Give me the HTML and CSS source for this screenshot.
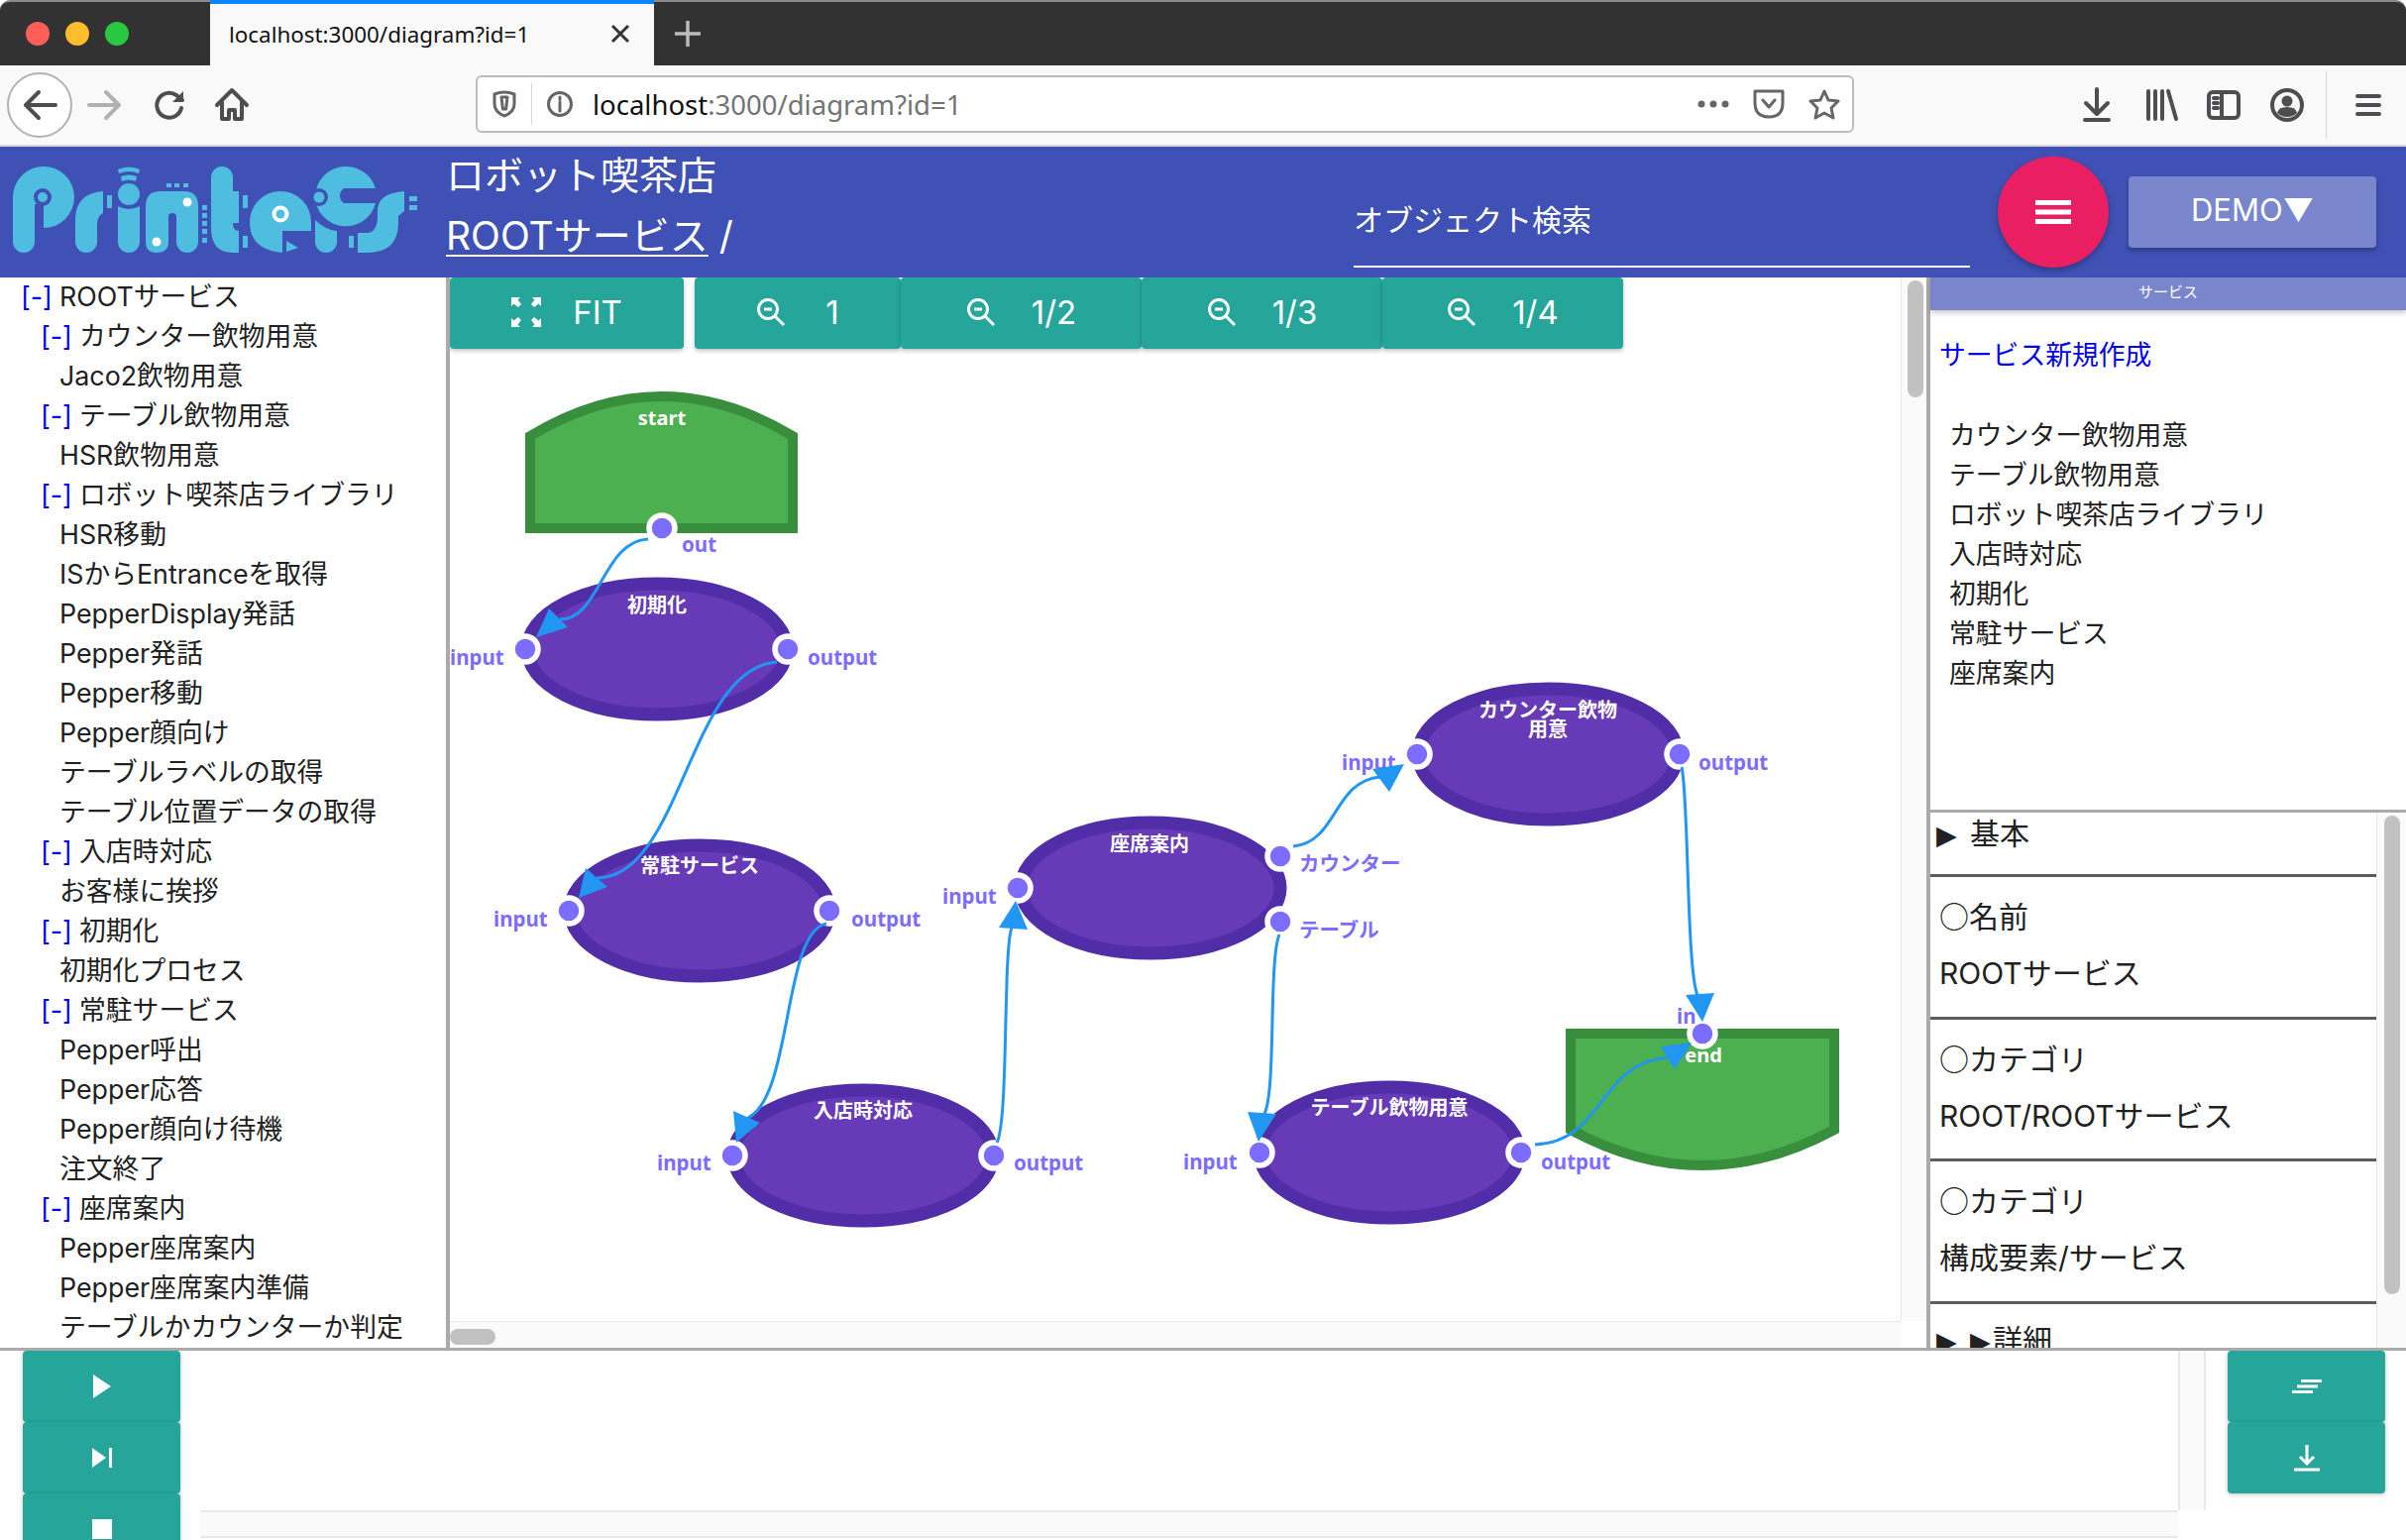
FILE: index.html
```html
<!DOCTYPE html>
<html lang="ja">
<head>
    <meta charset="UTF-8">
    <title>localhost:3000/diagram?id=1</title>
    <link rel="stylesheet" href="styles.css">
</head>
<body>
    <div class="tabbar">
        <div class="lights">
            <span class="light red"></span>
            <span class="light yellow"></span>
            <span class="light green"></span>
        </div>
        <div class="tab">
            <span class="tab-title">localhost:3000/diagram?id=1</span>
            <svg class="tab-close" width="20" height="20" viewBox="0 0 20 20"><path d="M2 2 18 18M18 2 2 18"/></svg>
        </div>
        <svg class="tab-new" width="30" height="30" viewBox="0 0 30 30"><path d="M15 2V28M2 15H28"/></svg>
    </div>

    <div class="toolbar">
        <div class="back-btn">
            <svg class="ticon" width="36" height="36" viewBox="0 0 36 36"><path d="M34 18H4M17 5 4 18 17 31"/></svg>
        </div>
        <svg class="ticon forward" width="36" height="36" viewBox="0 0 36 36"><path d="M2 18H32M19 5 32 18 19 31"/></svg>
        <svg class="ticon reload" width="36" height="36" viewBox="0 0 36 36"><path d="M30 21A12.5 12.5 0 1 1 25 8L31 13"/><path class="solid" d="M32 4V15H21Z"/></svg>
        <svg class="ticon home" width="36" height="36" viewBox="0 0 36 36"><path d="M3 18 18 3 33 18M8 15V32H15V23H21V32H28V15"/></svg>

        <div class="urlbar">
            <svg class="uicon shield" width="24" height="28" viewBox="0 0 24 28"><path d="M2 4Q12 0 22 4V14Q22 22 12 26 2 22 2 14Z"/><path d="M9 7H15L13.6 19H10.4Z"/></svg>
            <span class="url-sep"></span>
            <svg class="uicon info" width="26" height="26" viewBox="0 0 26 26"><circle cx="13" cy="13" r="11.5"/><path d="M13 11V20M13 6V8.5"/></svg>
            <span class="url-text">localhost<span class="url-rest">:3000/diagram?id=1</span></span>
            <svg class="uicon dots" width="32" height="8" viewBox="0 0 32 8"><circle cx="4" cy="4" r="3.5"/><circle cx="16" cy="4" r="3.5"/><circle cx="28" cy="4" r="3.5"/></svg>
            <svg class="uicon pocket" width="32" height="30" viewBox="0 0 32 30"><path d="M2 2H30V14Q30 28 16 28 2 28 2 14Z"/><path d="M10 11 16 18 22 11"/></svg>
            <svg class="uicon star" width="32" height="32" viewBox="0 0 32 32"><path d="M16 3 20 12 30 13 23 20 25 30 16 25 7 30 9 20 2 13 12 12Z"/></svg>
        </div>

        <svg class="ticon download" width="36" height="36" viewBox="0 0 36 36"><path d="M18 2V26M7 16 18 27 29 16M6 33H30"/></svg>
        <svg class="ticon library" width="36" height="36" viewBox="0 0 36 36"><path d="M5 4V32M12 4V32M19 4V32M25 4 33 32"/></svg>
        <svg class="ticon sidebar" width="36" height="36" viewBox="0 0 36 36"><rect x="3" y="5" width="30" height="26" rx="4"/><path d="M16 5V31M8 11H12M8 16H12M8 21H12"/></svg>
        <svg class="ticon account" width="36" height="36" viewBox="0 0 36 36"><circle cx="18" cy="18" r="15"/><circle class="solid" cx="18" cy="14" r="5.5"/><path class="solid" d="M8 26Q9 20 18 20 27 20 28 26 24 30 18 30 12 30 8 26Z"/></svg>
        <span class="tool-sep"></span>
        <svg class="ticon menu" width="36" height="36" viewBox="0 0 36 36"><path d="M7 9H29M7 18H29M7 27H29"/></svg>
    </div>

    <header class="appbar">
        <svg class="logo" width="428" height="100" viewBox="8 162 428 100" role="img" aria-label="ロゴ">
            <g class="logo-main">
                <path d="M13 199A31 31 0 0 1 75 199 31 31 0 0 1 44 230V206H35V244A11 11 0 0 1 13 244Z"/>
                <path d="M76 244V220Q77 195 104 193V215Q98 218 98 226V244A11 11 0 0 1 76 244Z"/>
                <rect x="108" y="197" width="5" height="13"/>
                <path d="M119 171Q130 166 141 171L140 175Q130 171 120 175Z"/>
                <path d="M122 178Q130 175 138 178L137 183Q130 180 123 183Z"/>
                <circle cx="130" cy="196" r="11"/>
                <path d="M119 208Q130 214 141 208V244A11 11 0 0 1 119 244Z"/>
                <path d="M147 244V208Q147 193 162 193H186Q200 193 200 208V244A11 11 0 0 1 178 244V219A4 4 0 0 0 170 219V244Q170 255 158 255 147 255 147 244Z"/>
                <rect x="168" y="185" width="5" height="4"/>
                <rect x="176" y="185" width="5" height="4"/>
                <rect x="185" y="185" width="5" height="4"/>
                <rect x="204" y="207" width="5" height="5"/>
                <rect x="204" y="215" width="5" height="5"/>
                <rect x="204" y="223" width="5" height="5"/>
                <rect x="204" y="231" width="5" height="5"/>
                <rect x="204" y="240" width="5" height="5"/>
                <path d="M213 179A11 11 0 0 1 235 179V193H241V225H235Q235 233 241 233V255H235Q213 255 213 230Z"/>
                <rect x="245" y="197" width="5" height="13"/>
                <rect x="245" y="238" width="5" height="12"/>
                <path d="M314 224V233H285V255Q252 252 252 224A31 31 0 0 1 314 224Z"/>
                <path d="M289 243 301 250 289 254Z"/>
                <path d="M349 168A31 31 0 0 1 379 190H347A9 9 0 0 0 347 205H379A31 31 0 0 1 318 199 31 31 0 0 1 349 168Z"/>
                <path d="M318 222Q328 232 340 233V244A11 11 0 0 1 318 244Z"/>
                <rect x="352" y="238" width="5" height="12"/>
                <path d="M361 235H370Q380 235 381 220V210Q383 195 408 193V213L402 218V225Q402 255 370 255H361Z"/>
                <rect x="413" y="198" width="8" height="5"/>
                <rect x="413" y="207" width="8" height="5"/>
            </g>
            <circle class="logo-gap" cx="43" cy="199" r="9"/>
            <circle class="logo-dot" cx="43" cy="199" r="5"/>
            <circle class="logo-gap" cx="322" cy="199" r="9"/>
            <circle class="logo-dot" cx="322" cy="199" r="5.5"/>
            <circle class="logo-white" cx="189" cy="204" r="4.5"/>
            <circle class="logo-white" cx="158" cy="244" r="4.5"/>
            <circle class="logo-white" cx="283" cy="216" r="8.5"/>
            <circle class="logo-dot" cx="283" cy="216" r="4.5"/>
        </svg>
        <div class="title">
            <div class="title-top">ロボット喫茶店</div>
            <div class="title-path"><a class="title-link">ROOTサービス</a> /</div>
        </div>
        <div class="search">オブジェクト検索</div>
        <button class="fab">
            <svg width="36" height="24" viewBox="0 0 36 24"><path d="M0 2.5H36M0 12H36M0 21.5H36"/></svg>
        </button>
        <button class="demo-btn">DEMO▼</button>
    </header>

    <div class="main">
        <nav class="tree">
            <div class="row lv0"><span class="toggle">[-]</span>ROOTサービス</div>
            <div class="row lv1"><span class="toggle">[-]</span>カウンター飲物用意</div>
            <div class="row leaf">Jaco2飲物用意</div>
            <div class="row lv1"><span class="toggle">[-]</span>テーブル飲物用意</div>
            <div class="row leaf">HSR飲物用意</div>
            <div class="row lv1"><span class="toggle">[-]</span>ロボット喫茶店ライブラリ</div>
            <div class="row leaf">HSR移動</div>
            <div class="row leaf">ISからEntranceを取得</div>
            <div class="row leaf">PepperDisplay発話</div>
            <div class="row leaf">Pepper発話</div>
            <div class="row leaf">Pepper移動</div>
            <div class="row leaf">Pepper顔向け</div>
            <div class="row leaf">テーブルラベルの取得</div>
            <div class="row leaf">テーブル位置データの取得</div>
            <div class="row lv1"><span class="toggle">[-]</span>入店時対応</div>
            <div class="row leaf">お客様に挨拶</div>
            <div class="row lv1"><span class="toggle">[-]</span>初期化</div>
            <div class="row leaf">初期化プロセス</div>
            <div class="row lv1"><span class="toggle">[-]</span>常駐サービス</div>
            <div class="row leaf">Pepper呼出</div>
            <div class="row leaf">Pepper応答</div>
            <div class="row leaf">Pepper顔向け待機</div>
            <div class="row leaf">注文終了</div>
            <div class="row lv1"><span class="toggle">[-]</span>座席案内</div>
            <div class="row leaf">Pepper座席案内</div>
            <div class="row leaf">Pepper座席案内準備</div>
            <div class="row leaf">テーブルかカウンターか判定</div>
        </nav>

        <section class="canvas-wrap">
            <div class="canvas-row">
                <div class="canvas">
                    <svg class="diagram" width="1464" height="1053" viewBox="454 280 1464 1053">
                        <path class="shape-end" d="M535 533V440Q667.5 360 800 440V533Z"/>
                        <path class="shape-end" d="M1585 1043H1851V1140Q1718 1212 1585 1140Z"/>
                        <ellipse class="shape-node" cx="663" cy="655" rx="131" ry="66"/>
                        <ellipse class="shape-node" cx="706" cy="919" rx="131" ry="66"/>
                        <ellipse class="shape-node" cx="871" cy="1166" rx="131" ry="66"/>
                        <ellipse class="shape-node" cx="1161" cy="896" rx="131" ry="66"/>
                        <ellipse class="shape-node" cx="1562" cy="761" rx="131" ry="66"/>
                        <ellipse class="shape-node" cx="1402" cy="1163" rx="131" ry="66"/>

                        <text class="node-name" x="668" y="429">start</text>
                        <text class="node-name" x="663" y="618">初期化</text>
                        <text class="node-name" x="706" y="881">常駐サービス</text>
                        <text class="node-name" x="871" y="1128">入店時対応</text>
                        <text class="node-name" x="1160" y="859">座席案内</text>
                        <text class="node-name" x="1562" y="724">カウンター飲物</text>
                        <text class="node-name" x="1562" y="743">用意</text>
                        <text class="node-name" x="1402" y="1125">テーブル飲物用意</text>
                        <text class="node-name" x="1719" y="1072">end</text>

                        <circle class="port" cx="668" cy="533" r="13"/>
                        <circle class="port" cx="530" cy="655" r="13"/>
                        <circle class="port" cx="795" cy="655" r="13"/>
                        <circle class="port" cx="574" cy="919" r="13"/>
                        <circle class="port" cx="837" cy="919" r="13"/>
                        <circle class="port" cx="739" cy="1166" r="13"/>
                        <circle class="port" cx="1003" cy="1166" r="13"/>
                        <circle class="port" cx="1027" cy="896" r="13"/>
                        <circle class="port" cx="1292" cy="864" r="13"/>
                        <circle class="port" cx="1292" cy="930" r="13"/>
                        <circle class="port" cx="1430" cy="761" r="13"/>
                        <circle class="port" cx="1695" cy="761" r="13"/>
                        <circle class="port" cx="1271" cy="1163" r="13"/>
                        <circle class="port" cx="1535" cy="1163" r="13"/>
                        <circle class="port" cx="1718" cy="1043" r="13"/>

                        <text class="port-name" x="688" y="557">out</text>
                        <text class="port-name" x="454" y="671">input</text>
                        <text class="port-name" x="815" y="671">output</text>
                        <text class="port-name" x="498" y="935">input</text>
                        <text class="port-name" x="859" y="935">output</text>
                        <text class="port-name" x="663" y="1181">input</text>
                        <text class="port-name" x="1023" y="1181">output</text>
                        <text class="port-name" x="951" y="912">input</text>
                        <text class="port-name" x="1311" y="879">カウンター</text>
                        <text class="port-name" x="1311" y="946">テーブル</text>
                        <text class="port-name" x="1354" y="777">input</text>
                        <text class="port-name" x="1714" y="777">output</text>
                        <text class="port-name" x="1194" y="1180">input</text>
                        <text class="port-name" x="1555" y="1180">output</text>
                        <text class="port-name" x="1692" y="1033">in</text>

                        <path class="edge" d="M654 544C608 546 606 625 565 625"/>
                        <path class="edge-head" d="M541 643 554 614 573 633Z"/>
                        <path class="edge" d="M784 668C695 674 688 886 602 886"/>
                        <path class="edge-head" d="M584 906 591 876 613 895Z"/>
                        <path class="edge" d="M834 932C790 940 800 1105 755 1128"/>
                        <path class="edge-head" d="M743 1153 740 1121 767 1133Z"/>
                        <path class="edge" d="M1006 1153C1018 1130 1012 960 1021 936"/>
                        <path class="edge-head" d="M1025 909 1008 936 1037 938Z"/>
                        <path class="edge" d="M1305 854C1350 850 1345 788 1393 784"/>
                        <path class="edge-head" d="M1417 771 1385 776 1402 799Z"/>
                        <path class="edge" d="M1697 774C1704 800 1702 980 1713 1004"/>
                        <path class="edge-head" d="M1718 1031 1701 1004 1730 1002Z"/>
                        <path class="edge" d="M1291 943C1280 970 1288 1100 1276 1124"/>
                        <path class="edge-head" d="M1270 1152 1259 1122 1288 1124Z"/>
                        <path class="edge" d="M1549 1155C1620 1152 1612 1072 1684 1067"/>
                        <path class="edge-head" d="M1707 1052 1676 1056 1690 1079Z"/>
                    </svg>
                    <div class="zoom-bar">
                        <button class="btn btn-fit">
                            <svg class="btn-icon" width="30" height="30" viewBox="0 0 30 30"><path class="solid" d="M0 0H9L6.5 2.5 10 7 7 10 2.5 6.5 0 9ZM30 0V9L27.5 6.5 23 10 20 7 23.5 2.5 21 0ZM0 30V21L2.5 23.5 7 20 10 23 6.5 27.5 9 30ZM30 30H21L23.5 27.5 20 23 23 20 27.5 23.5 30 21Z"/></svg>
                            FIT
                        </button>
                        <button class="btn btn-one">
                            <svg class="btn-icon" width="30" height="30" viewBox="0 0 30 30"><circle cx="12" cy="12" r="9.5"/><path d="M19 19 28 28M8 12H16"/></svg>
                            1
                        </button>
                        <button class="btn btn-part">
                            <svg class="btn-icon" width="30" height="30" viewBox="0 0 30 30"><circle cx="12" cy="12" r="9.5"/><path d="M19 19 28 28M8 12H16"/></svg>
                            1/2
                        </button>
                        <button class="btn btn-part">
                            <svg class="btn-icon" width="30" height="30" viewBox="0 0 30 30"><circle cx="12" cy="12" r="9.5"/><path d="M19 19 28 28M8 12H16"/></svg>
                            1/3
                        </button>
                        <button class="btn btn-part">
                            <svg class="btn-icon" width="30" height="30" viewBox="0 0 30 30"><circle cx="12" cy="12" r="9.5"/><path d="M19 19 28 28M8 12H16"/></svg>
                            1/4
                        </button>
                    </div>
                </div>
                <div class="vtrack"><div class="vthumb"></div></div>
            </div>
            <div class="htrack"><div class="hthumb"></div></div>
        </section>

        <aside class="side">
            <div class="side-tab">サービス</div>
            <div class="side-top">
                <a class="side-link">サービス新規作成</a>
                <ul class="side-list">
                    <li>カウンター飲物用意</li>
                    <li>テーブル飲物用意</li>
                    <li>ロボット喫茶店ライブラリ</li>
                    <li>入店時対応</li>
                    <li>初期化</li>
                    <li>常駐サービス</li>
                    <li>座席案内</li>
                </ul>
            </div>
            <div class="props-wrap">
                <div class="props">
                    <div class="prop-head"><span class="arrow">▶</span>基本</div>
                    <div class="prop"><p><span class="mark">○</span>名前</p><p>ROOTサービス</p></div>
                    <div class="prop"><p><span class="mark">○</span>カテゴリ</p><p>ROOT/ROOTサービス</p></div>
                    <div class="prop"><p><span class="mark">○</span>カテゴリ</p><p>構成要素/サービス</p></div>
                    <div class="prop-head prop-more"><span class="arrow">▶</span><span class="arrow arrow-small">▶</span>詳細</div>
                </div>
                <div class="props-track"><div class="props-thumb"></div></div>
            </div>
        </aside>
    </div>

    <div class="bottom">
        <div class="run-btns">
            <button class="btn btn-run"><svg width="18" height="24" viewBox="0 0 18 24"><path class="solid" d="M0 0 18 12 0 24Z"/></svg></button>
            <button class="btn btn-run"><svg width="20" height="20" viewBox="0 0 20 20"><path class="solid" d="M0 0 14 10 0 20ZM17 0H20V20H17Z"/></svg></button>
            <button class="btn btn-run"><svg width="20" height="20" viewBox="0 0 20 20"><path class="solid" d="M0 0H20V20H0Z"/></svg></button>
        </div>
        <div class="editor">
            <div class="editor-row">
                <div class="editor-text"></div>
                <div class="editor-vtrack"></div>
            </div>
            <div class="editor-htrack"></div>
        </div>
        <div class="log-btns">
            <button class="btn btn-run"><svg width="30" height="14" viewBox="0 0 30 14"><path d="M9 1.5H30M5 7H26M0 12.5H21"/></svg></button>
            <button class="btn btn-run"><svg width="28" height="28" viewBox="0 0 28 28"><path d="M14 1V19M7 13 14 20 21 13"/><path d="M1 26H27"/></svg></button>
        </div>
    </div>
</body>
</html>
```

FILE: styles.css
```css
html, body {
    margin: 0;
    padding: 0;
}
body {
    width: 2428px;
    height: 1554px;
    overflow: hidden;
    background: white;
    color: #212121;
    font-family: Inter, "Noto Sans CJK JP", sans-serif;
    font-size: 26.8px;
    display: flex;
    flex-direction: column;
}
button {
    border: none;
    font-family: inherit;
    color: white;
    padding: 0;
}
.solid {
    fill: white;
    stroke: none;
}

/* browser chrome */
.tabbar {
    height: 64px;
    flex: none;
    display: flex;
    align-items: center;
    background: #323232;
    border-top: 2px solid #8a8a8a;
    border-radius: 10px 10px 0 0;
}
.lights {
    width: 212px;
    flex: none;
    display: flex;
    gap: 16px;
    padding-left: 26px;
    box-sizing: border-box;
}
.light {
    width: 24px;
    height: 24px;
    border-radius: 50%;
}
.red { background: #ff5f57; }
.yellow { background: #ffbd2e; }
.green { background: #28c940; }
.tab {
    width: 448px;
    height: 66px;
    margin-top: -2px;
    flex: none;
    box-sizing: border-box;
    border-top: 4px solid #0a84ff;
    background: #f9f9fa;
    display: flex;
    align-items: center;
    padding: 0 24px 2px 19px;
    justify-content: space-between;
}
.tab-title {
    font-family: "Noto Sans", sans-serif;
    font-size: 22.4px;
    color: #111;
}
.tab-close path {
    stroke: #333;
    stroke-width: 3;
    fill: none;
}
.tab-new {
    margin-left: 19px;
}
.tab-new path {
    stroke: #bbb;
    stroke-width: 3.5;
    fill: none;
}

.toolbar {
    height: 80px;
    flex: none;
    display: flex;
    align-items: center;
    background: #f9f9fa;
    border-bottom: 2px solid #d9d9db;
}
.ticon {
    flex: none;
}
.ticon path, .ticon circle, .ticon rect {
    stroke: #4e4e50;
    stroke-width: 4;
    fill: none;
    stroke-linecap: round;
    stroke-linejoin: round;
}
.ticon .solid {
    fill: #4e4e50;
    stroke: none;
}
.back-btn {
    width: 62px;
    height: 62px;
    margin-left: 7px;
    flex: none;
    display: flex;
    align-items: center;
    justify-content: center;
    background: white;
    border: 2px solid #b1b1b3;
    border-radius: 50%;
}
.forward { margin-left: 15px; }
.forward path { stroke: #b1b1b3; }
.reload { margin-left: 29px; }
.home { margin-left: 27px; }

.urlbar {
    width: 1391px;
    height: 58px;
    margin-left: 228px;
    margin-top: -2px;
    flex: none;
    box-sizing: border-box;
    display: flex;
    align-items: center;
    background: white;
    border: 2px solid #bcbcbe;
    border-radius: 6px;
}
.uicon path, .uicon circle {
    stroke: #666;
    stroke-width: 3;
    fill: none;
    stroke-linejoin: round;
    stroke-linecap: round;
}
.shield { margin-left: 15px; flex: none; }
.url-sep {
    width: 1px;
    height: 42px;
    margin-left: 15px;
    background: #d8d8da;
}
.info { margin-left: 15px; flex: none; }
.url-text {
    font-family: "Noto Sans", sans-serif;
    font-size: 27.5px;
    color: #111;
    margin-left: 20px;
    flex: 1;
}
.url-rest { color: #737373; }
.dots { flex: none; }
.dots circle { fill: #666; stroke: none; }
.pocket { margin-left: 24px; flex: none; }
.star { margin-left: 24px; margin-right: 12px; flex: none; }

.download { margin-left: 227px; }
.library { margin-left: 29px; }
.sidebar { margin-left: 27px; }
.account { margin-left: 28px; }
.tool-sep {
    width: 1px;
    height: 68px;
    margin-left: 21px;
    background: #d8d8da;
}
.menu { margin-left: 24px; }

/* app header */
.appbar {
    height: 132px;
    flex: none;
    display: flex;
    align-items: center;
    background: #3f51b5;
    color: white;
}
.logo {
    margin-left: 8px;
    margin-top: -5px;
    flex: none;
}
.logo-main { fill: #4fbde0; }
.logo-gap { fill: #3f51b5; }
.logo-dot { fill: #4fbde0; }
.logo-white { fill: white; }
.title {
    width: 916px;
    margin-left: 14px;
    font-size: 39px;
    line-height: 61px;
    margin-top: -14px;
    flex: none;
}
.title-link {
    text-decoration: underline;
    text-underline-offset: 5px;
    text-decoration-thickness: 2px;
}
.search {
    width: 622px;
    height: 64px;
    flex: none;
    box-sizing: border-box;
    margin-top: 48px;
    font-size: 30px;
    line-height: 32px;
    border-bottom: 2px solid white;
}
.fab {
    width: 112px;
    height: 112px;
    margin-left: 28px;
    flex: none;
    border-radius: 50%;
    background: #e91e63;
    box-shadow: 0 3px 6px rgba(0,0,0,0.3);
    display: flex;
    align-items: center;
    justify-content: center;
}
.fab path {
    stroke: white;
    stroke-width: 5;
}
.demo-btn {
    width: 250px;
    height: 72px;
    margin-left: 20px;
    padding-bottom: 5px;
    flex: none;
    background: #7986cb;
    border-radius: 4px;
    font-size: 31px;
    box-shadow: 0 3px 5px rgba(0,0,0,0.3);
}

/* main area */
.main {
    height: 1080px;
    flex: none;
    display: flex;
    border-bottom: 3px solid #aaa;
}
.tree {
    width: 450px;
    flex: none;
    overflow: hidden;
    border-right: 4px solid #aaa;
}
.row {
    height: 40px;
    line-height: 38px;
    white-space: nowrap;
}
.lv0 { padding-left: 21px; }
.lv1 { padding-left: 41px; }
.leaf { padding-left: 60px; }
.toggle {
    display: inline-block;
    width: 39px;
    color: #0000ee;
}

.canvas-wrap {
    width: 1490px;
    flex: none;
    display: flex;
    flex-direction: column;
    border-right: 4px solid #aaa;
}
.canvas-row {
    height: 1053px;
    flex: none;
    display: flex;
}
.canvas {
    width: 1464px;
    flex: none;
    position: relative;
    overflow: hidden;
}
.diagram {
    position: absolute;
    left: 0;
    top: 0;
}
.shape-end {
    fill: #4caf50;
    stroke: #388e3c;
    stroke-width: 10;
}
.shape-node {
    fill: #673ab7;
    stroke: #512da8;
    stroke-width: 13;
}
.node-name {
    fill: white;
    font-family: "Noto Sans", "Noto Sans CJK JP", sans-serif;
    font-size: 20px;
    font-weight: 700;
    text-anchor: middle;
}
.port {
    fill: #7c6cff;
    stroke: white;
    stroke-width: 5.5;
}
.port-name {
    fill: #7c6cff;
    font-family: "Noto Sans", "Noto Sans CJK JP", sans-serif;
    font-size: 20.5px;
    font-weight: 700;
}
.edge {
    fill: none;
    stroke: #2196f3;
    stroke-width: 3;
}
.edge-head {
    fill: #2196f3;
}

.zoom-bar {
    position: relative;
    display: flex;
}
.btn {
    background: #26a69a;
    border-radius: 4px;
    display: flex;
    align-items: center;
    justify-content: center;
    font-size: 33px;
    box-shadow: 0 2px 4px rgba(0,0,0,0.25);
    flex: none;
}
.btn svg path, .btn svg circle {
    stroke: white;
    stroke-width: 3;
    fill: none;
}
.btn svg .solid {
    fill: white;
    stroke: none;
}
.zoom-bar .btn { height: 72px; padding-bottom: 2px; }
.btn-fit { width: 236px; margin-right: 11px; gap: 32px; }
.btn-one { width: 208px; gap: 40px; }
.btn-part { width: 243px; gap: 36px; }

.vtrack {
    width: 26px;
    flex: none;
    background: #fafafa;
    border-left: 1px solid #e8e8e8;
    box-sizing: border-box;
}
.vthumb {
    width: 16px;
    height: 118px;
    margin: 3px 0 0 6px;
    background: #c1c1c1;
    border-radius: 8px;
}
.htrack {
    height: 27px;
    width: 1464px;
    box-sizing: border-box;
    background: #fafafa;
    border-top: 1px solid #e8e8e8;
}
.hthumb {
    width: 46px;
    height: 16px;
    margin-top: 7px;
    background: #c1c1c1;
    border-radius: 8px;
}

.side {
    flex: 1;
    min-width: 0;
    display: flex;
    flex-direction: column;
}
.side-tab {
    height: 33px;
    flex: none;
    background: #7986cb;
    color: white;
    font-size: 15px;
    line-height: 30px;
    text-align: center;
    box-shadow: 0 3px 5px rgba(0,0,0,0.2);
    position: relative;
}
.side-top {
    height: 507px;
    flex: none;
    box-sizing: border-box;
    padding: 25px 0 0 9px;
    border-bottom: 3px solid #aaa;
}
.side-link {
    color: #0000ee;
    line-height: 40px;
    display: block;
}
.side-list {
    list-style: none;
    margin: 41px 0 0;
    padding: 0 0 0 10px;
}
.side-list li {
    height: 40px;
    line-height: 40px;
}
.props-wrap {
    flex: 1;
    min-height: 0;
    display: flex;
    overflow: hidden;
}
.props {
    width: 450px;
    flex: none;
    font-size: 30px;
}
.prop-head {
    height: 62px;
    line-height: 42px;
    padding-left: 6px;
    border-bottom: 3px solid #5c5c5c;
    white-space: nowrap;
}
.prop-more {
    border-bottom: none;
    line-height: 72px;
}
.arrow {
    display: inline-block;
    width: 34px;
    font-family: "DejaVu Sans", sans-serif;
    font-size: 27px;
    line-height: 30px;
}
.arrow-small {
    width: 23px;
}
.mark {
    font-family: "Noto Sans CJK JP", sans-serif;
}
.prop {
    height: 143.5px;
    box-sizing: border-box;
    padding: 18px 0 0 9px;
    border-bottom: 3px solid #5c5c5c;
}
.prop p {
    margin: 0 0 17px;
    line-height: 40px;
}
.props-track {
    flex: 1;
    background: #fafafa;
    border-left: 1px solid #e8e8e8;
}
.props-thumb {
    width: 16px;
    height: 483px;
    margin: 3px 0 0 7px;
    background: #c1c1c1;
    border-radius: 8px;
}

/* bottom console */
.bottom {
    flex: 1;
    min-height: 0;
    display: flex;
    overflow: hidden;
}
.run-btns, .log-btns {
    width: 159px;
    flex: none;
}
.run-btns { margin-left: 23px; }
.btn-run {
    width: 159px;
    height: 72px;
    box-shadow: 0 1px 4px rgba(0,0,0,0.25);
}
.editor {
    width: 2024px;
    margin-left: 20px;
    flex: none;
}
.editor-row {
    height: 161px;
    display: flex;
}
.editor-text {
    width: 1996px;
    flex: none;
}
.editor-vtrack {
    flex: 1;
    background: #fafafa;
    border-left: 2px solid #e8e8e8;
    border-right: 2px solid #e8e8e8;
}
.editor-htrack {
    width: 1996px;
    height: 28px;
    box-sizing: border-box;
    background: #fafafa;
    border-top: 2px solid #e8e8e8;
    border-bottom: 2px solid #e8e8e8;
}
.log-btns { margin-left: 22px; }
```
